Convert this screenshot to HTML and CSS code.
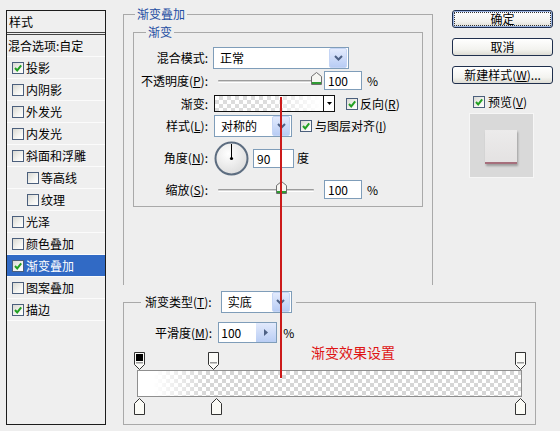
FILE: index.html
```html
<!DOCTYPE html>
<html lang="zh-CN">
<head>
<meta charset="utf-8">
<title>图层样式</title>
<link rel="stylesheet" href="styles.css">
</head>
<body>
<div class="dialog">
  <div class="styles-list">
    <div class="list-head">样式</div>
    <div class="list-row blend">混合选项:自定</div>
    <div class="list-row"><span class="cb on"><svg viewBox="0 0 10 10"><path d="M2 5 L4.2 7.4 L8.2 2.4" /></svg></span>投影</div>
    <div class="list-row"><span class="cb"></span>内阴影</div>
    <div class="list-row"><span class="cb"></span>外发光</div>
    <div class="list-row"><span class="cb"></span>内发光</div>
    <div class="list-row"><span class="cb"></span>斜面和浮雕</div>
    <div class="list-row sub"><span class="cb"></span>等高线</div>
    <div class="list-row sub"><span class="cb"></span>纹理</div>
    <div class="list-row"><span class="cb"></span>光泽</div>
    <div class="list-row"><span class="cb"></span>颜色叠加</div>
    <div class="list-row selected"><span class="cb on"><svg viewBox="0 0 10 10"><path d="M2 5 L4.2 7.4 L8.2 2.4" /></svg></span>渐变叠加</div>
    <div class="list-row"><span class="cb"></span>图案叠加</div>
    <div class="list-row"><span class="cb on"><svg viewBox="0 0 10 10"><path d="M2 5 L4.2 7.4 L8.2 2.4" /></svg></span>描边</div>
  </div>

  <div class="main">
    <fieldset class="group outer">
      <legend>渐变叠加</legend>
      <fieldset class="group inner">
        <legend>渐变</legend>
        <div class="row r1">
          <span class="lbl">混合模式:</span>
          <div class="select w-mode"><span class="txt">正常</span><span class="drop"><svg width="9" height="6" viewBox="0 0 9 6"><path d="M1 1 L4.5 4.5 L8 1"/></svg></span></div>
        </div>
        <div class="row r2">
          <span class="lbl">不透明度(<u>P</u>):</span>
          <div class="slider"><span class="track"></span><svg class="thumb" style="left:93px" width="11" height="13" viewBox="0 0 11 13"><path d="M0.5 4.5 L5.5 0.5 L10.5 4.5 V12.5 H0.5 Z" fill="#f6f6f2" stroke="#6e6e6e"/><rect x="1" y="10" width="9" height="2" fill="#2f9b33"/></svg></div>
          <span class="num">100</span><span class="unit">%</span>
        </div>
        <div class="row r3">
          <span class="lbl">渐变:</span>
          <span class="swatch"></span><span class="swdrop"><svg width="5" height="3" viewBox="0 0 5 3"><path d="M0 0 H5 L2.5 3 Z" fill="#000"/></svg></span>
          <span class="cb on gap-rev"><svg viewBox="0 0 10 10"><path d="M2 5 L4.2 7.4 L8.2 2.4" /></svg></span><span>反向(<u>R</u>)</span>
        </div>
        <div class="row r4">
          <span class="lbl">样式(<u>L</u>):</span>
          <div class="select w-style"><span class="txt">对称的</span><span class="drop"><svg width="9" height="6" viewBox="0 0 9 6"><path d="M1 1 L4.5 4.5 L8 1"/></svg></span></div>
          <span class="cb on gap-align"><svg viewBox="0 0 10 10"><path d="M2 5 L4.2 7.4 L8.2 2.4" /></svg></span><span>与图层对齐(<u>I</u>)</span>
        </div>
        <div class="row r5">
          <span class="lbl">角度(<u>N</u>):</span>
          <svg class="dial" width="35" height="35" viewBox="0 0 35 35"><defs><radialGradient id="dg" cx="40%" cy="35%" r="70%"><stop offset="0" stop-color="#ffffff"/><stop offset="1" stop-color="#dcdcdc"/></radialGradient></defs><circle cx="17.5" cy="17.5" r="16" fill="url(#dg)" stroke="#5d6d80" stroke-width="2"/><line x1="17.5" y1="17.5" x2="17.5" y2="3" stroke="#000" stroke-width="1"/><circle cx="17.5" cy="17.5" r="1.6" fill="#000"/></svg>
          <span class="num angle">90</span><span class="unit deg">度</span>
        </div>
        <div class="row r6">
          <span class="lbl">缩放(<u>S</u>):</span>
          <div class="slider"><span class="track"></span><svg class="thumb" style="left:58px" width="11" height="13" viewBox="0 0 11 13"><path d="M0.5 4.5 L5.5 0.5 L10.5 4.5 V12.5 H0.5 Z" fill="#f6f6f2" stroke="#6e6e6e"/><rect x="1" y="10" width="9" height="2" fill="#2f9b33"/></svg></div>
          <span class="num">100</span><span class="unit">%</span>
        </div>
      </fieldset>
    </fieldset>
  </div>

  <div class="side">
    <div class="btn default">确定</div>
    <div class="btn">取消</div>
    <div class="btn">新建样式(<u>W</u>)...</div>
    <div class="preview-check"><span class="cb on"><svg viewBox="0 0 10 10"><path d="M2 5 L4.2 7.4 L8.2 2.4" /></svg></span><span>预览(<u>V</u>)</span></div>
    <div class="preview"><span class="preview-square"></span></div>
  </div>

  <fieldset class="group lower">
    <legend><span>渐变类型(<u>T</u>):</span><span class="select w-type"><span class="txt">实底</span><span class="drop"><svg width="9" height="6" viewBox="0 0 9 6"><path d="M1 1 L4.5 4.5 L8 1"/></svg></span></span></legend>
    <div class="smooth">
      <span>平滑度(<u>M</u>):</span>
      <span class="stepper"><span class="v">100</span><span class="arr"><svg width="4" height="7" viewBox="0 0 4 7"><path d="M0 0 L4 3.5 L0 7 Z" fill="#4d6185"/></svg></span></span>
      <span class="unit">%</span>
    </div>
    <div class="editor">
      <span class="note">渐变效果设置</span>
      <div class="stops top">
        <svg class="stop" style="left:-3px" width="11" height="18" viewBox="0 0 11 18"><path d="M0.5 0.5 H10.5 V12.5 L5.5 17.5 L0.5 12.5 Z" fill="#fbfbf8" stroke="#333"/><rect x="2" y="2" width="7" height="7" fill="#000"/><rect x="2" y="10" width="7" height="1.5" fill="#9a9a9a"/></svg>
        <svg class="stop" style="left:71px" width="11" height="18" viewBox="0 0 11 18"><path d="M0.5 0.5 H10.5 V12.5 L5.5 17.5 L0.5 12.5 Z" fill="#fbfbf8" stroke="#333"/><rect x="2" y="10" width="7" height="1.5" fill="#9a9a9a"/></svg>
        <svg class="stop" style="left:378px" width="11" height="18" viewBox="0 0 11 18"><path d="M0.5 0.5 H10.5 V12.5 L5.5 17.5 L0.5 12.5 Z" fill="#fbfbf8" stroke="#333"/><rect x="2" y="10" width="7" height="1.5" fill="#9a9a9a"/></svg>
      </div>
      <div class="bar"></div>
      <div class="stops bottom">
        <svg class="stop" style="left:-3px" width="11" height="18" viewBox="0 0 11 18"><path d="M5.5 0.5 L10.5 5.5 V16.5 H0.5 V5.5 Z" fill="#fbfbf6" stroke="#333"/></svg>
        <svg class="stop" style="left:74px" width="11" height="18" viewBox="0 0 11 18"><path d="M5.5 0.5 L10.5 5.5 V16.5 H0.5 V5.5 Z" fill="#fbfbf6" stroke="#333"/></svg>
        <svg class="stop" style="left:378px" width="11" height="18" viewBox="0 0 11 18"><path d="M5.5 0.5 L10.5 5.5 V16.5 H0.5 V5.5 Z" fill="#fbfbf6" stroke="#333"/></svg>
      </div>
    </div>
  </fieldset>
</div>
<div class="annot-line"></div>
</body>
</html>
```
FILE: styles.css
```css
html, body {
  margin: 0;
  padding: 0;
}
body {
  width: 560px;
  height: 431px;
  overflow: hidden;
  position: relative;
  background: #eeeeee;
  color: #000;
  font-family: "Noto Sans CJK SC", "Liberation Sans", sans-serif;
  font-size: 12px;
  line-height: 14px;
}
u { text-decoration: underline; text-underline-offset: 1px; }

.dialog {
  display: grid;
  grid-template-columns: 117px 329px 114px;
  grid-template-rows: auto auto;
  padding: 7px 0 0 6px;
}

/* ---------- left style list ---------- */
.styles-list {
  grid-column: 1;
  grid-row: 1 / 3;
  width: 100px;
  height: 415px;
  margin-top: 3px;
  box-sizing: border-box;
  border: 1px solid #1c1c1c;
  background: #efefef;
}
.list-head {
  height: 21px;
  line-height: 21px;
  padding-left: 2px;
  border-bottom: 3px double #444;
}
.list-row {
  display: flex;
  align-items: center;
  height: 21px;
  border-bottom: 1px solid #fbfbfb;
  padding-left: 5px;
  white-space: nowrap;
}
.list-row.blend { padding-left: 1px; }
.list-row.sub { padding-left: 20px; }
.list-row.selected { background: #316ac5; color: #fff; }
.list-row .cb { margin-right: 2px; }

/* ---------- checkbox ---------- */
.cb {
  display: inline-flex;
  flex: none;
  width: 12px;
  height: 12px;
  box-sizing: border-box;
  border: 1px solid #4b5f7c;
  background: linear-gradient(135deg, #d9d9d3 0%, #f4f4f1 60%, #ffffff 100%);
}
.cb svg { width: 10px; height: 10px; }
.cb svg path { fill: none; stroke: #22a022; stroke-width: 2; }

/* ---------- fieldsets ---------- */
fieldset.group {
  margin: 0;
  padding: 0;
  min-width: 0;
  border: 1px solid #a9a9a9;
}
fieldset.group > legend {
  padding: 0 2px;
  line-height: 14px;
  color: #1f4fa3;
}
.main { grid-column: 2; grid-row: 1; }
.outer {
  width: 310px;
  height: 278px;
  box-sizing: border-box;
  padding: 0 9px !important;
  border-bottom: none !important;
}
.outer > legend { margin-left: 2px; }
.inner {
  margin-top: 4px !important;
  padding: 0 0 7px 0 !important;
}
.inner > legend { margin-left: 12px; }

.row { display: flex; align-items: center; white-space: nowrap; }
.lbl { flex: none; width: 74px; margin-right: 6px; text-align: right; }
.r1 { margin-top: 8px; height: 22px; }
.r2 { margin-top: 2px; height: 19px; }
.r3 { margin-top: 5px; height: 17px; }
.r4 { margin-top: 3px; height: 22px; }
.r5 { margin-top: 4px; height: 34px; }
.r6 { margin-top: 5px; height: 19px; }

/* select box */
.select {
  display: flex;
  align-items: center;
  height: 22px;
  box-sizing: border-box;
  border: 1px solid #7f9db9;
  background: #fff;
  padding: 0 1px 0 6px;
  color: #000;
}
.select .txt { flex: 1; }
.select .drop {
  display: flex;
  align-items: center;
  justify-content: center;
  width: 16px;
  height: 18px;
  border: 1px solid #c5d5f5;
  border-radius: 2px;
  background: linear-gradient(#e3ebfd, #b8ccf4);
}
.select .drop path { fill: none; stroke: #4d6185; stroke-width: 2; }
.w-mode { width: 136px; margin-left: -1px; }
.w-style { width: 78px; }
.w-type { width: 71px; margin-left: 9px; }

/* slider */
.slider {
  position: relative;
  flex: none;
  width: 102px;
  height: 19px;
  margin-left: 4px;
}
.slider .track {
  position: absolute;
  left: 0;
  top: 9px;
  width: 96px;
  height: 1px;
  border-top: 1px solid #9c9c9c;
  border-bottom: 1px solid #ffffff;
  background: #d4d4d4;
  border-radius: 1px;
}
.slider .thumb { position: absolute; top: 1px; }

.num {
  flex: none;
  width: 38px;
  height: 19px;
  box-sizing: border-box;
  border: 1px solid #7f9db9;
  background: #fff;
  padding-left: 3px;
  line-height: 17px;
  margin-left: 4px;
}
.unit { margin-left: 5px; }
.num.angle { width: 41px; margin-left: 4px; }
.unit.deg { margin-left: 3px; }

.swatch {
  flex: none;
  width: 110px;
  height: 17px;
  box-sizing: border-box;
  border: 1px solid #111;
  background:
    linear-gradient(to right, rgba(255,255,255,0) 45%, #ffffff 98%),
    repeating-conic-gradient(#dcdcdc 0% 25%, #ffffff 0% 50%) 0 0 / 8px 8px;
}
.swdrop {
  flex: none;
  display: flex;
  align-items: center;
  justify-content: center;
  width: 11px;
  height: 17px;
  box-sizing: border-box;
  border: 1px solid #111;
  border-left: none;
  background: #fff;
}
.gap-rev { margin-left: 11px; margin-right: 2px; }
.gap-align { margin-left: 8px; margin-right: 3px; }
.dial { flex: none; }

/* ---------- right side ---------- */
.side { grid-column: 3; grid-row: 1; margin-top: 3px; }
.btn {
  width: 101px;
  height: 18px;
  box-sizing: border-box;
  border: 1px solid #1f2f4d;
  border-radius: 3px;
  background: linear-gradient(#ffffff, #f3f3ef 65%, #dddcd4);
  text-align: center;
  line-height: 16px;
  margin-bottom: 10px;
  white-space: nowrap;
}
.btn.default {
  outline: 1px dotted #333;
  outline-offset: -3px;
  box-shadow: inset 0 0 0 1px #9db6e4;
}
.preview-check {
  display: flex;
  align-items: center;
  height: 14px;
  margin: 11px 0 0 21px;
}
.preview-check .cb { margin-right: 3px; }
.preview {
  display: block;
  width: 65px;
  height: 65px;
  box-sizing: border-box;
  margin: 4px 0 0 17px;
  padding: 16px 0 0 15px;
  background: #d9d9d9;
  border: 1px solid #f6f6f6;
}
.preview-square {
  display: block;
  width: 32px;
  height: 32px;
  background: linear-gradient(#ecebeb, #e4e2e2);
  border-bottom: 2px solid #a66f7c;
  box-shadow: 1px 2px 2px rgba(0,0,0,0.28);
}

/* ---------- lower gradient editor ---------- */
.lower {
  grid-column: 2 / 4;
  grid-row: 2;
  width: 413px;
  height: 134px;
  box-sizing: border-box;
  margin-top: 6px !important;
}
fieldset.lower > legend {
  display: flex;
  align-items: center;
  margin-left: 17px;
  padding: 0 4px;
  color: #000;
  white-space: nowrap;
}
.smooth {
  display: flex;
  align-items: center;
  height: 21px;
  margin-top: 9px;
  padding-left: 31px;
  white-space: nowrap;
}
.stepper {
  display: flex;
  width: 59px;
  height: 21px;
  box-sizing: border-box;
  margin-left: 6px;
  border: 1px solid #7f9db9;
  background: #fff;
}
.stepper .v { flex: 1; padding-left: 2px; line-height: 19px; }
.stepper .arr {
  display: flex;
  align-items: center;
  justify-content: center;
  width: 20px;
  background: linear-gradient(#e2eafc, #b9cdf4);
}
.smooth .unit { margin-left: 6px; }

.editor {
  position: relative;
  width: 385px;
  margin: 9px 0 0 13px;
}
.note {
  position: absolute;
  left: 174px;
  top: -8px;
  color: #de1414;
  font-size: 14px;
  line-height: 16px;
  white-space: nowrap;
}
.stops { position: relative; height: 18px; }
.stops.bottom { height: 17px; }
.stops .stop { position: absolute; top: 0; }
.stops.bottom .stop { top: 1px; }
.bar {
  height: 27px;
  box-sizing: border-box;
  border: 1px solid #8f8f8f;
  background:
    linear-gradient(to right, #ffffff 0%, #ffffff 4%, rgba(255,255,255,0) 18%),
    repeating-conic-gradient(#d6d6d6 0% 25%, #ffffff 0% 50%) 0 0 / 8px 8px;
}

/* annotation line drawn over the dialog */
.annot-line {
  position: absolute;
  left: 280px;
  top: 97px;
  width: 2px;
  height: 281px;
  background: #cc1a1a;
}
```
